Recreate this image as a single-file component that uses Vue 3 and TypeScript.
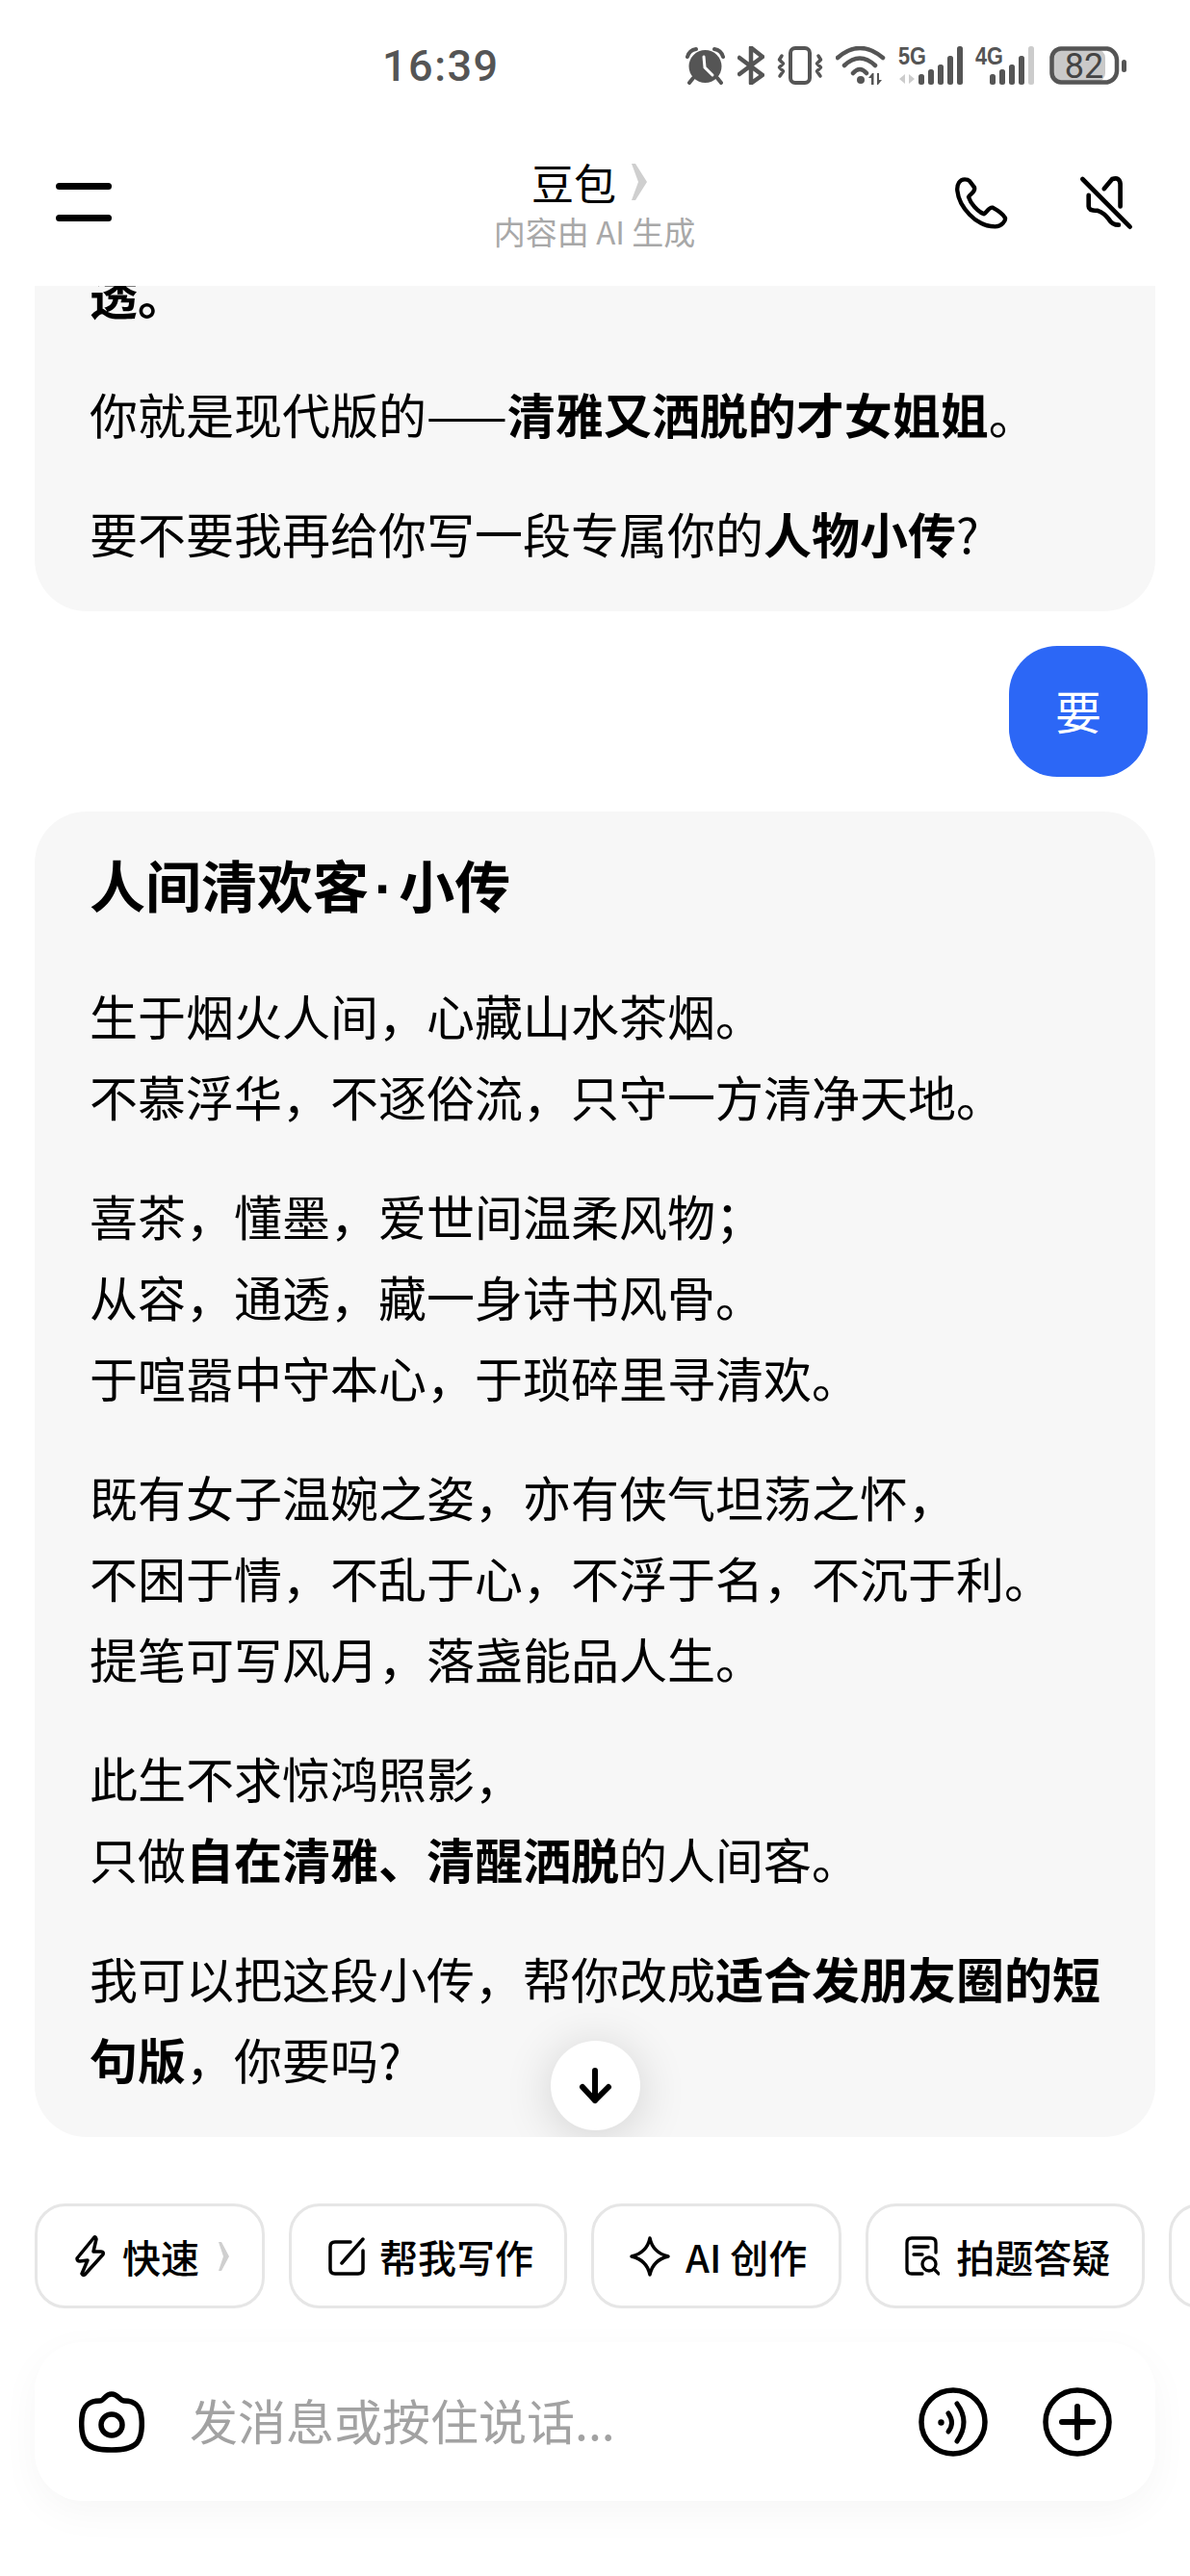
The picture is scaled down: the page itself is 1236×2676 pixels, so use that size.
<script setup lang="ts">
const bio: string[][] = [
  ['生于烟火人间，心藏山水茶烟。', '不慕浮华，不逐俗流，只守一方清净天地。'],
  ['喜茶，懂墨，爱世间温柔风物；', '从容，通透，藏一身诗书风骨。', '于喧嚣中守本心，于琐碎里寻清欢。'],
  ['既有女子温婉之姿，亦有侠气坦荡之怀，', '不困于情，不乱于心，不浮于名，不沉于利。', '提笔可写风月，落盏能品人生。'],
]
const sig5 = [77, 72, 67, 58, 48]
</script>

<template>
  <div class="phone">
    <header class="status">
      <span class="time">16:39</span>
      <div class="status-icons">
        <svg width="41" height="40" viewBox="0 0 41 40" fill="none">
          <circle cx="20.5" cy="21" r="17" fill="#555" />
          <path d="M2 11Q4 4 11 3M39 11Q37 4 30 3M8 33L4 38M33 33L37 38" stroke="#555" stroke-width="4" stroke-linecap="round" />
          <path d="M19 11L20 22L28 30" stroke="#fff" stroke-width="3" fill="none" stroke-linecap="round" />
        </svg>
        <svg width="28" height="40" viewBox="0 0 28 40" fill="none">
          <path d="M2 12L26 30L14 38.5V1.5L26 11L2 29" stroke="#555" stroke-width="4.5" stroke-linejoin="round" stroke-linecap="round" />
        </svg>
        <svg width="48" height="40" viewBox="0 0 48 40" fill="none" stroke="#555">
          <rect x="14" y="2" width="20" height="36" rx="5" stroke-width="4" />
          <path d="M5 10L2.500 14L6.500 18L2.500 22L6.500 26L3 31M43 10L45.500 14L41.500 18L45.500 22L41.500 26L45 31" stroke-width="3.500" stroke-linecap="round" stroke-linejoin="round" />
        </svg>
        <svg width="52" height="40" viewBox="0 0 52 40" fill="none">
          <path d="M2 12Q25 -8 49 12M9 20Q25 5 41 20M18 28Q25 20 32 28" stroke="#555" stroke-width="4.500" stroke-linecap="round" />
          <circle cx="26" cy="35" r="4" fill="#555" />
          <path d="M37 40V33H34L38 28L39.500 28V40ZM45 28V35H48L44 40H43V28Z" fill="#555" />
        </svg>
        <svg class="sig" width="67" height="40" viewBox="0 0 67 40">
          <text x="0" y="19" class="net" textLength="29" lengthAdjust="spacingAndGlyphs">5G</text>
          <path d="M1 34L7 29V39ZM11 29L17 34L11 39Z" fill="#ccc" />
          <rect v-for="(top, i) in sig5" :key="i" :x="21 + i * 10" :y="top - 48" width="6" :height="88 - top" rx="2.500" fill="#555" />
        </svg>
        <svg class="sig" width="61" height="40" viewBox="0 0 61 40">
          <text x="0" y="19" class="net" textLength="29" lengthAdjust="spacingAndGlyphs">4G</text>
          <rect v-for="(top, i) in sig5" :key="i" :x="15 + i * 10" :y="top - 48" width="6" :height="88 - top" rx="2.500" :fill="i === 4 ? '#ccc' : '#555'" />
        </svg>
        <svg class="battery" width="81" height="40" viewBox="0 0 81 40">
          <rect x="3" y="3" width="55" height="34" rx="9" fill="#c9c9c9" />
          <path d="M12 2.500H60A12 12 0 0 1 70 14V26A12 12 0 0 1 60 37.500H12A10 10 0 0 1 2.500 27V13A10 10 0 0 1 12 2.500Z" fill="none" stroke="#555" stroke-width="4.500" />
          <rect x="75" y="14" width="5" height="13" rx="2.500" fill="#555" />
          <text x="36" y="33" class="batt" text-anchor="middle">82</text>
        </svg>
      </div>
    </header>

    <nav class="nav">
      <div class="menu"><i></i><i></i></div>
      <div class="title-block">
        <div class="title">
          <span>豆包</span>
          <svg width="20" height="40" viewBox="0 0 20 40"><path d="M2 1H6L18 20L6 39H2L9 20Z" fill="#cfcfcf" /></svg>
        </div>
        <div class="sub">内容由 AI 生成</div>
      </div>
      <div class="nav-actions">
        <svg width="55" height="55" viewBox="70 65 165 165" fill="none">
          <path d="M100 75C85 75 75 90 77 110C82 160 135 222 195 222C215 222 228 205 226 195C220 185 200 170 187 163C175 160 168 180 160 183C140 175 118 150 112 130C115 120 135 115 130 100L115 80C110 75 105 75 100 75Z" stroke="#000" stroke-width="13" stroke-linejoin="round" />
        </svg>
        <svg width="57" height="57" viewBox="450 68 170 170" fill="none">
          <path d="M463 80L610 228M530 110L555 80Q578 72 580 95V165M482 130V165Q482 178 510 178Q530 185 545 205Q555 222 575 222" stroke="#000" stroke-width="14" stroke-linecap="round" />
        </svg>
      </div>
    </nav>

    <main class="chat">
      <section class="card">
        <p><b>透。</b></p>
        <p>你就是现代版的——<b>清雅又洒脱的才女姐姐</b>。</p>
        <p>要不要我再给你写一段专属你的<b>人物小传</b>?</p>
      </section>
      <div class="bubble">要</div>
      <section class="card">
        <h2>人间清欢客<span class="dot">·</span>小传</h2>
        <p v-for="(para, i) in bio" :key="i">
          <template v-for="(line, j) in para" :key="j">{{ line }}<br v-if="j < para.length - 1" /></template>
        </p>
        <p>此生不求惊鸿照影，<br />只做<b>自在清雅、清醒洒脱</b>的人间客。</p>
        <p>我可以把这段小传，帮你改成<b>适合发朋友圈的短句版</b>，你要吗?</p>
      </section>
      <button class="down" type="button" aria-label="回到底部">
        <svg width="93" height="93" viewBox="0 0 93 93" fill="none">
          <path d="M46 31V62M33 48L46 62L60 48" stroke="#000" stroke-width="6" stroke-linecap="round" stroke-linejoin="round" />
        </svg>
      </button>
    </main>

    <div class="chips">
      <div class="chip">
        <svg width="33" height="45" viewBox="0 0 33 45" fill="none"><path d="M21 3L3 25Q3 28 6 28L14 27L8 41Q9 43 11 42L30 21Q31 18 28 18L20 18L23 5Q22 2 21 3Z" stroke="#000" stroke-width="3.500" stroke-linejoin="round" /></svg>
        <span>快速</span>
        <svg class="chev" width="13" height="32" viewBox="0 0 13 32"><path d="M1 1H4L12 16L4 31H1L6 16Z" fill="#cfcfcf" /></svg>
      </div>
      <div class="chip write">
        <svg width="38" height="40" viewBox="0 0 38 40" fill="none"><path d="M23 5H7Q2 5 2 10V33Q2 38 7 38H31Q36 38 36 33V14" stroke="#000" stroke-width="3.500" stroke-linecap="round" /><path d="M14 27L36 2" stroke="#000" stroke-width="3.500" stroke-linecap="round" /></svg>
        <span>帮我写作</span>
      </div>
      <div class="chip ai">
        <svg width="44" height="44" viewBox="0 0 44 44" fill="none"><path d="M22 3Q25 18 41 22Q25 26 22 41Q19 26 3 22Q19 18 22 3Z" stroke="#000" stroke-width="3.500" stroke-linejoin="round" /></svg>
        <span>AI 创作</span>
      </div>
      <div class="chip">
        <svg width="36" height="41" viewBox="0 0 36 41" fill="none"><path d="M18 39H7Q2 39 2 34V7Q2 2 7 2H27Q32 2 32 7V17M9 11H24M9 19H18M30 34L35 39" stroke="#000" stroke-width="3.300" stroke-linecap="round" /><circle cx="25" cy="29" r="7" stroke="#000" stroke-width="3.300" /></svg>
        <span>拍题答疑</span>
      </div>
      <div class="chip empty"></div>
    </div>

    <div class="composer">
      <svg class="camera" width="68" height="64" viewBox="0 0 68 64" fill="none">
        <path d="M22 10C26 10 27 3 34 3C41 3 42 10 47 10C58 10 64 15 65 28C66 40 65 48 60 54C54 60 45 61 34 61C22 61 13 60 8 54C3 48 2 40 3 28C4 15 10 10 22 10Z" stroke="#000" stroke-width="5.500" />
        <circle cx="34" cy="35" r="11" stroke="#000" stroke-width="5.500" />
      </svg>
      <span class="placeholder">发消息或按住说话...</span>
      <svg class="voice" width="72" height="72" viewBox="0 0 72 72" fill="none">
        <circle cx="36" cy="36" r="33" stroke="#000" stroke-width="5.500" />
        <circle cx="23.500" cy="36.500" r="3.200" fill="#000" />
        <path d="M31 27Q38 37 31 46M40 17Q54 36 40 56" stroke="#000" stroke-width="5" stroke-linecap="round" />
      </svg>
      <svg class="plus" width="72" height="72" viewBox="0 0 72 72" fill="none">
        <circle cx="36" cy="36" r="33" stroke="#000" stroke-width="5.500" />
        <path d="M20 36H52M36 20V52" stroke="#000" stroke-width="6" stroke-linecap="round" />
      </svg>
    </div>
  </div>
</template>

<style scoped>
.phone {
  width: 1236px;
  height: 2676px;
  display: flex;
  flex-direction: column;
  overflow: hidden;
  background: #fff;
  color: #000;
  font-family: "Noto Sans CJK SC", "Noto Sans", sans-serif;
}
.status {
  height: 136px;
  flex: none;
  display: flex;
  align-items: center;
  justify-content: space-between;
  padding: 0 65px 0 397px;
  box-sizing: border-box;
}
.time {
  font-family: Roboto, "Liberation Sans", sans-serif;
  font-size: 45px;
  font-weight: 500;
  letter-spacing: 1.500px;
  color: #555;
}
.status-icons {
  display: flex;
  align-items: center;
  gap: 13px;
}
.sig { overflow: visible; }
.net {
  font-family: "Liberation Sans", sans-serif;
  font-size: 25px;
  font-weight: 700;
  fill: #555;
}
.batt {
  font-family: Roboto, "Liberation Sans", sans-serif;
  font-size: 36px;
  fill: #444;
}
.battery { margin-left: 3px; overflow: visible; }
.nav {
  height: 161px;
  flex: none;
  box-sizing: border-box;
  padding: 0 59px 13px 58px;
  display: grid;
  grid-template-columns: 1fr auto 1fr;
  align-items: center;
}
.menu {
  display: flex;
  flex-direction: column;
  gap: 26px;
}
.menu i {
  display: block;
  width: 58px;
  height: 7px;
  border-radius: 4px;
  background: #000;
}
.title-block { text-align: center; }
.title {
  font-size: 44px;
  line-height: 60px;
  display: flex;
  justify-content: center;
  align-items: center;
  gap: 14px;
  padding-right: 9px;
}
.sub {
  font-size: 33px;
  line-height: 42px;
  color: #a8a8a8;
}
.nav-actions {
  display: flex;
  justify-content: flex-end;
  align-items: center;
  gap: 73px;
}
.chat {
  flex: 1;
  min-height: 0;
  position: relative;
  overflow: hidden;
  display: flex;
  flex-direction: column;
  justify-content: flex-end;
  padding: 0 36px;
}
.card {
  flex: none;
  background: #f7f7f7;
  border-radius: 54px;
  padding: 33px 50px 40px 57px;
  font-size: 50px;
  line-height: 84px;
}
.card p { margin: 0 0 40px; }
.card p:last-child { margin-bottom: 0; }
.card b { font-weight: 700; }
.card h2 {
  margin: 0 0 47px;
  font-size: 58px;
  line-height: 84px;
  font-weight: 700;
}
.dot {
  font-family: "Liberation Sans", sans-serif;
  margin: 0 6px;
}
.bubble {
  flex: none;
  align-self: flex-end;
  margin: 36px 8px 36px 0;
  width: 144px;
  height: 136px;
  border-radius: 50px;
  background: #2c67f6;
  color: #fff;
  font-size: 48px;
  line-height: 132px;
  text-align: center;
}
.down {
  position: absolute;
  left: 572px;
  bottom: 7px;
  width: 93px;
  height: 93px;
  padding: 0;
  border: 0;
  border-radius: 50%;
  background: #fff;
  box-shadow: 0 6px 50px rgba(0, 0, 0, 0.16);
}
.down svg { display: block; }
.chips {
  flex: none;
  display: flex;
  gap: 25px;
  margin-top: 69px;
  padding-left: 36px;
  overflow: hidden;
}
.chip {
  flex: none;
  height: 109px;
  box-sizing: border-box;
  border: 3px solid #e6e6e6;
  border-radius: 32px;
  padding: 0 33px 0 38px;
  display: flex;
  align-items: center;
  gap: 17px;
  font-size: 40px;
  font-weight: 500;
  white-space: nowrap;
}
.chip .chev { margin-left: 2px; }
.chip.write { gap: 15px; padding-right: 32px; }
.chip.ai { padding: 0 33px 0 36px; gap: 15px; }
.chip.empty { width: 120px; }
.composer {
  flex: none;
  height: 165px;
  box-sizing: border-box;
  margin: 35px 36px 78px;
  padding: 0 45px 0 46px;
  border-radius: 50px;
  background: #fff;
  box-shadow: 0 12px 40px rgba(0, 0, 0, 0.04);
  display: flex;
  align-items: center;
}
.placeholder {
  margin-left: 47px;
  margin-bottom: 5px;
  flex: 1;
  font-size: 50px;
  color: #a2a2a2;
}
.plus { margin-left: 57px; }
</style>
